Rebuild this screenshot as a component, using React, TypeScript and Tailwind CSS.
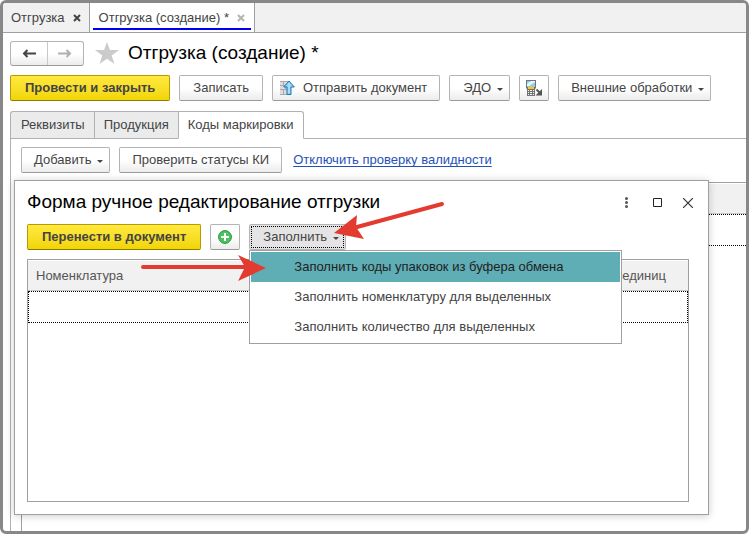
import { useState } from "react";
import clsx from "clsx";

const menuItems = [
  "Заполнить коды упаковок из буфера обмена",
  "Заполнить номенклатуру для выделенных",
  "Заполнить количество для выделенных",
];

const formTabs = ["Реквизиты", "Продукция", "Коды маркировки"];

function Caret() {
  return (
    <svg width="6" height="3" viewBox="0 0 6 3" className="mt-0.5 shrink-0" aria-hidden="true">
      <path d="M0 0h6L3 3z" fill="#444" />
    </svg>
  );
}

function Button({
  children,
  primary,
  pressed,
  className,
  ...rest
}: {
  children: React.ReactNode;
  primary?: boolean;
  pressed?: boolean;
} & React.ButtonHTMLAttributes<HTMLButtonElement>) {
  return (
    <button
      type="button"
      className={clsx(
        "flex h-[26px] shrink-0 items-center justify-center whitespace-nowrap rounded-[2px] border text-[13px]",
        primary
          ? "border-[#b39b00] border-b-[#8f7d00] bg-linear-to-b from-[#ffe93c] to-[#f2d500] px-[14px] font-bold text-[#444]"
          : pressed
            ? "border-[#b4b4b4] bg-[#e4e4e4] text-[#444]"
            : "border-[#b4b4b4] border-b-[#9a9a9a] bg-linear-to-b from-white from-50% to-[#ececec] text-[#444]",
        className
      )}
      {...rest}
    >
      {children}
    </button>
  );
}

function SendIcon() {
  return (
    <svg width="16" height="16" viewBox="0 0 16 16" aria-hidden="true">
      <path d="M1 1h10v14H1z" fill="#a9a9a9" />
      <path d="M1 2h3v3H1zM5 2h5v3H5zM1 6h5v3H1zM7 6h3v3H7zM1 10h3v4H1zM5 10h5v4H5z" fill="#dcdcdc" />
      <path d="M10 1l5.300 6h-3.300v7.500H8V7H4.700z" fill="#8fd0f5" stroke="#1f74b0" />
      <path d="M10 3v10" stroke="#c4e8fb" />
    </svg>
  );
}

function TerminalIcon() {
  return (
    <svg width="17" height="17" viewBox="0 0 17 17" aria-hidden="true">
      <path d="M0 0h10v8l-1 1v7H1V9L0 8z" fill="#747474" />
      <path d="M1 1h8v6H1z" fill="#8fccf0" />
      <path d="M1 4l4-3h4v1L3 6H1z" fill="#e6f6ff" />
      <path d="M2 7h6v2H2z" fill="#ffc800" />
      <path d="M2 10h1v1H2zM4 10h2v1H4zM7 10h1v1H7zM2 12h1v1H2zM4 12h2v1H4zM7 12h1v1H7zM2 14h1v1H2zM4 14h2v1H4zM7 14h1v1H7z" fill="#f0f0f0" />
      <path d="M10.500 9.500l4 4" stroke="#555" strokeWidth="2" />
      <path d="M16 9v6.500H9.500z" fill="#555" />
    </svg>
  );
}

function PlusIcon() {
  return (
    <svg width="14" height="14" viewBox="0 0 14 14" aria-hidden="true">
      <circle cx="7" cy="7" r="6.400" fill="#4cc45c" stroke="#23923a" />
      <path d="M7 3v8M3 7h8" stroke="#fff" strokeWidth="2" />
    </svg>
  );
}

function CloseMark({ className }: { className: string }) {
  return (
    <svg width="8" height="8" viewBox="0 0 8 8" className={className} aria-hidden="true">
      <path d="M1 1l6 6M7 1L1 7" stroke="currentColor" strokeWidth="2" />
    </svg>
  );
}

function Arrows() {
  return (
    <svg
      width="320"
      height="90"
      viewBox="0 0 320 90"
      className="pointer-events-none absolute top-[15px] left-[122px] z-20"
      aria-hidden="true"
    >
      <g stroke="#e43b30" strokeWidth="4" strokeLinecap="round">
        <path d="M305 8L220 31" />
        <path d="M6 71H110" />
      </g>
      <g fill="#e43b30">
        <path d="M197 37l23-18-1 12 8 12z" />
        <path d="M129 72l-28-13 7 12-7 14z" />
      </g>
    </svg>
  );
}

function FillDialog() {
  const [open, setOpen] = useState(true);
  const [active, setActive] = useState(0);

  return (
    <section
      aria-label="Форма ручное редактирование отгрузки"
      className="absolute top-[177px] right-[37px] bottom-4 left-[11px] z-10 flex flex-col border border-[#a0a0a0] bg-white px-3 pb-3 shadow-[0_1px_8px_rgba(0,0,0,0.2)]"
    >
      <header className="flex h-[43px] shrink-0 items-center justify-between">
        <h2 className="text-[19px] text-black">Форма ручное редактирование отгрузки</h2>
        <div className="flex items-center gap-[15px]">
          <button type="button" aria-label="Ещё" className="flex size-4 items-center justify-center">
            <svg width="3" height="11" viewBox="0 0 3 11" fill="#555">
              <circle cx="1.500" cy="1.500" r="1.500" />
              <circle cx="1.500" cy="5.500" r="1.500" />
              <circle cx="1.500" cy="9.500" r="1.500" />
            </svg>
          </button>
          <button type="button" aria-label="Развернуть" className="flex size-4 items-center justify-center">
            <svg width="9" height="9" viewBox="0 0 9 9" fill="none">
              <path d="M.5.5h8v8h-8z" stroke="#222" />
            </svg>
          </button>
          <button type="button" aria-label="Закрыть" className="flex size-4 items-center justify-center">
            <svg width="10" height="10" viewBox="0 0 10 10" fill="none">
              <path d="M0 0l10 10M10 0L0 10" stroke="#333" strokeWidth="1.200" />
            </svg>
          </button>
        </div>
      </header>

      <div className="flex gap-[9px]">
        <Button primary>Перенести в документ</Button>
        <Button aria-label="Добавить строку" className="w-[30px]">
          <PlusIcon />
        </Button>
        <div className="relative">
          <Button pressed aria-expanded={open} onClick={() => setOpen(!open)} className="p-px">
            <span className="flex h-full items-center gap-1.5 border border-dotted border-black pr-1 pl-[11px]">
              Заполнить
              <Caret />
            </span>
          </Button>
          {open && (
            <ul className="absolute top-[26px] left-0 z-10 w-[373px] border border-[#a0a0a0] bg-white p-px">
              {menuItems.map((item, i) => (
                <li key={item}>
                  <button
                    type="button"
                    onMouseEnter={() => setActive(i)}
                    className={clsx(
                      "block h-[30px] w-full pl-[43px] text-left text-[13px]",
                      i === active ? "bg-[#5fadb5] text-[#222]" : "text-[#444]"
                    )}
                  >
                    {item}
                  </button>
                </li>
              ))}
            </ul>
          )}
        </div>
      </div>

      <div className="mt-[9px] mr-[7px] flex-1 border border-[#a0a0a0]">
        <table className="w-full border-separate border-spacing-0 text-[13px] text-[#555]">
          <thead>
            <tr className="h-[31px] bg-[#f1f1f1]">
              <th className="border-t border-b border-t-white border-b-[#c8c8c8] pl-2 text-left font-normal">Номенклатура</th>
              <th className="border-t border-b border-t-white border-b-[#c8c8c8] pr-[22px] text-right font-normal">единиц</th>
            </tr>
          </thead>
          <tbody>
            <tr className="h-8">
              <td colSpan={2} className="border border-dotted border-black" />
            </tr>
          </tbody>
        </table>
      </div>
      <Arrows />
    </section>
  );
}

export default function App() {
  const [tab, setTab] = useState(2);

  return (
    <div className="min-h-screen bg-white font-['Liberation_Sans',Arial,sans-serif] text-[13px] text-[#444]">
      <div className="relative flex min-h-screen flex-col overflow-hidden rounded-md border-3 border-[#888]">
        <nav className="flex h-[30px] shrink-0 border-b border-[#a0a0a0] bg-[#f1f1f1]">
          <button type="button" className="flex items-center gap-2 border-r border-[#a0a0a0] px-2">
            Отгрузка
            <CloseMark className="text-[#444]" />
          </button>
          <button type="button" className="flex border-r border-[#a0a0a0] bg-white px-[3px] pb-0.5">
            <span className="flex h-full items-center gap-2 border-b-2 border-[#0000f0] px-1.5 pt-1">
              Отгрузка (создание) *
              <CloseMark className="text-[#b4b4b4]" />
            </span>
          </button>
        </nav>

        <div className="flex min-h-0 flex-1 flex-col pt-2 pl-[7px]">
          <div className="flex h-[25px] items-center">
            <div className="flex h-[25px] w-[74px] rounded-[3px] border border-[#b4b4b4] border-b-[#9a9a9a] bg-linear-to-b from-white from-50% to-[#ececec]">
              <button type="button" aria-label="Назад" className="flex flex-1 items-center justify-center border-r border-[#c8c8c8]">
                <svg width="14" height="9" viewBox="0 0 14 9" fill="none" stroke="#444" strokeWidth="2">
                  <path d="M14 4.500H2M5.500 1L2 4.500 5.500 8" />
                </svg>
              </button>
              <button type="button" aria-label="Вперёд" className="flex flex-1 items-center justify-center">
                <svg width="14" height="9" viewBox="0 0 14 9" fill="none" stroke="#b0b0b0" strokeWidth="2">
                  <path d="M0 4.500h12M8.500 1L12 4.500 8.500 8" />
                </svg>
              </button>
            </div>
            <svg width="24" height="23" viewBox="0 0 24 23" className="ml-[11px]" aria-hidden="true">
              <path d="M12 0l2.900 8H24l-7.300 5.400L19.500 22 12 16.800 4.500 22l2.800-8.600L0 8h9.100z" fill="#cbcbcb" />
            </svg>
            <h1 className="ml-[9px] text-[19px] text-black">Отгрузка (создание) *</h1>
          </div>

          <div className="mt-[9px] flex gap-[9px]">
            <Button primary>Провести и закрыть</Button>
            <Button className="px-[13px]">Записать</Button>
            <Button className="gap-2 px-1.5 pr-3">
              <SendIcon />
              Отправить документ
            </Button>
            <Button className="gap-1.5 pr-1.5 pl-[13px]">
              ЭДО
              <Caret />
            </Button>
            <Button aria-label="Терминал сбора данных" className="w-[30px]">
              <TerminalIcon />
            </Button>
            <Button className="gap-1.5 pr-1.5 pl-3">
              Внешние обработки
              <Caret />
            </Button>
          </div>

          <div className="mt-[10px] flex h-7 items-stretch">
            <div role="tablist" className="flex">
              {formTabs.map((name, i) => (
                <button
                  key={name}
                  type="button"
                  role="tab"
                  aria-selected={i === tab}
                  onClick={() => setTab(i)}
                  className={clsx(
                    "border-t border-b border-l border-[#b0b0b0] px-[9px] first:rounded-tl-[3px] first:pl-2.5 last:rounded-tr-[3px] last:border-r",
                    i === tab ? "border-b-white bg-white" : "bg-[#ebebeb]"
                  )}
                >
                  {name}
                </button>
              ))}
            </div>
            <div className="flex-1 border-b border-[#b0b0b0]" />
          </div>

          <div className="flex flex-1 flex-col border-l border-[#b0b0b0] pt-2 pl-[10px]">
            <div className="flex items-center gap-[9px]">
              <Button className="gap-1.5 pr-1.5 pl-3">
                Добавить
                <Caret />
              </Button>
              <Button className="px-3">Проверить статусы КИ</Button>
              <a href="#" className="ml-0.5 text-[#1f52b8] underline underline-offset-2">
                Отключить проверку валидности
              </a>
            </div>
            <div className="mt-[9px] flex-1 border-t border-l border-[#a0a0a0]">
              <div className="h-[31px] border-t border-b border-t-white border-b-[#c8c8c8] bg-[#f1f1f1]" />
              <div className="h-8 border-y border-dotted border-black" />
            </div>
          </div>
        </div>

        <FillDialog />
      </div>
    </div>
  );
}
